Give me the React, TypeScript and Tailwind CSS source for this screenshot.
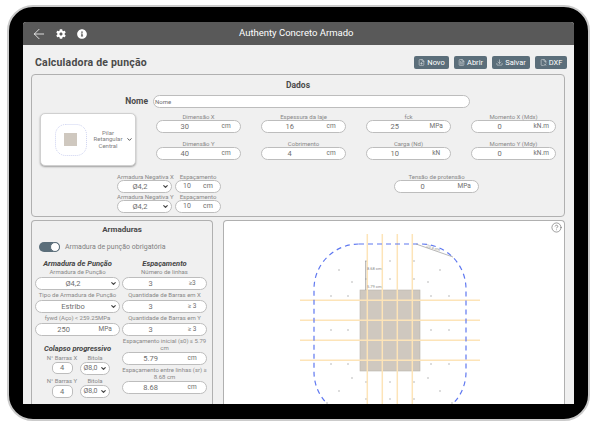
import { ArrowLeft, ChevronDown, CircleHelp, Download, FilePlus, FileText, FileX2 } from "lucide-react";
import { FaCog, FaInfoCircle } from "react-icons/fa";

const BUTTONS = [
  { label: "Novo", icon: FilePlus, w: "w-[35px]" },
  { label: "Abrir", icon: FileText, w: "w-[33px]" },
  { label: "Salvar", icon: Download, w: "w-[38px]" },
  { label: "DXF", icon: FileX2, w: "w-[32px]" },
];

const DADOS = [
  { label: "Dimensão X", value: "30", unit: "cm" },
  { label: "Espessura da laje", value: "16", unit: "cm" },
  { label: "fck", value: "25", unit: "MPa" },
  { label: "Momento X (Mdx)", value: "0", unit: "kN.m" },
  { label: "Dimensão Y", value: "40", unit: "cm" },
  { label: "Cobrimento", value: "4", unit: "cm" },
  { label: "Carga (Nd)", value: "10", unit: "kN" },
  { label: "Momento Y (Mdy)", value: "0", unit: "kN.m" },
];

// dots of the punching perimeter, in screen pixels
const DOTS = [
  [338, 270], [351, 282], [330, 296], [347, 296], [330, 330], [347, 330], [330, 364], [347, 364],
  [351, 378], [338, 391], [326, 403], [365, 261], [389, 261], [413, 261], [365, 279], [389, 279],
  [413, 279], [439, 270], [427, 282], [430, 296], [448, 296], [430, 330], [448, 330], [430, 364],
  [448, 364], [427, 378], [439, 391], [451, 403], [365, 382], [389, 382], [413, 382], [365, 399],
  [389, 399], [413, 399],
];

function Box({ value, unit }: { value: string; unit?: string }) {
  return (
    <div className="flex h-[13px] w-full items-center rounded-[7px] border border-[#bdbdbd] bg-white text-[7.5px] leading-[11px] text-[#6e6e6e]">
      <span className="w-[56px] text-center">{value}</span>
      <span className="w-[28px] text-center text-[6.5px]">{unit}</span>
    </div>
  );
}

function Field({ label, value, unit }: { label: string; value: string; unit?: string }) {
  return (
    <div className="w-[85px]">
      <div className="h-[7px] text-center text-[6px] leading-[7px] whitespace-nowrap text-[#888]">{label}</div>
      <Box value={value} unit={unit} />
    </div>
  );
}

function Drop({ value, className = "" }: { value: string; className?: string }) {
  return (
    <div className={`flex h-[13px] items-center rounded-[7px] border border-[#bdbdbd] bg-white pr-[2px] text-[7.5px] text-[#6e6e6e] ${className}`}>
      <span className="flex-1 text-center">{value}</span>
      <ChevronDown size={7} strokeWidth={4} className="text-[#444]" />
    </div>
  );
}

function Labelled({ label, children, h = "h-[9px]" }: { label: string; children: React.ReactNode; h?: string }) {
  return (
    <div className="mb-[1px] w-[85px]">
      <div className={`${h} flex items-center justify-center text-center text-[6px] leading-[6.5px] text-[#888]`}>{label}</div>
      {children}
    </div>
  );
}

function Negative({ label }: { label: string }) {
  return (
    <div className="flex gap-[3px]">
      <div className="w-[55px]">
        <div className="h-[7px] text-center text-[6px] leading-[7px] whitespace-nowrap text-[#888]">{label}</div>
        <Drop value="Ø4,2" />
      </div>
      <div className="w-[46px]">
        <div className="h-[7px] text-center text-[6px] leading-[7px] text-[#888]">Espaçamento</div>
        <div className="flex h-[13px] items-center rounded-[7px] border border-[#bdbdbd] bg-white text-[7px] text-[#6e6e6e]">
          <span className="w-[22px] text-center">10</span>
          <span className="w-[20px] text-center">cm</span>
        </div>
      </div>
    </div>
  );
}

function Diagram() {
  return (
    <svg viewBox="223 221 341 183" className="block h-[183px] w-[341px]">
      <rect x="359" y="290" width="60" height="81" fill="#cfc8bf" stroke="#b9b4ac" strokeWidth="0.6" />
      {DOTS.map(([x, y]) => (
        <rect key={`${x}-${y}`} x={x - 0.5} y={y - 0.5} width="1" height="1" fill="#777" />
      ))}
      {[366.3, 381.3, 396.3, 411.3].map((x) => (
        <line key={x} x1={x} y1="234" x2={x} y2="404" stroke="#fde4b8" strokeWidth="1.5" />
      ))}
      {[300.3, 320.3, 340.3, 360.3].map((y) => (
        <line key={y} x1="299" y1={y} x2="479" y2={y} stroke="#fde4b8" strokeWidth="1.5" />
      ))}
      <rect x="313" y="244" width="152" height="173" rx="45" fill="none" stroke="#5f78f0" strokeWidth="1.2" strokeDasharray="5 4" />
      <line x1="364.7" y1="261" x2="364.7" y2="290" stroke="#888" strokeWidth="0.7" />
      <line x1="415" y1="244" x2="452" y2="257" stroke="#999" strokeWidth="0.7" />
      <g fontFamily="Roboto, sans-serif" fontSize="4" fill="#888">
        <text x="366" y="269.5">8.68 cm</text>
        <text x="366" y="287.5">5.79 cm</text>
        <text x="425" y="247" transform="rotate(18 425 247)">20.4 cm</text>
      </g>
    </svg>
  );
}

export default function App() {
  return (
    <div className="h-[429px] w-[597px] overflow-hidden bg-white pt-[5px] pl-[7px] font-['Roboto',sans-serif]">
      <div className="h-[416px] w-[583px] rounded-[26px] border-2 border-[#cbcbcb] bg-black px-[14px] py-[15px]">
        <div className="flex h-full flex-col overflow-hidden rounded-t-[3px] bg-[#f0f0f0]">
          <header className="relative flex h-[23px] shrink-0 items-center bg-[#595959] pl-[8px] text-white">
            <ArrowLeft size={16} strokeWidth={1.2} />
            <FaCog className="ml-[9px] h-[10px] w-[10px]" />
            <FaInfoCircle className="ml-[11px] h-[10px] w-[10px]" />
            <div className="absolute left-[216px] text-[9.5px] whitespace-nowrap">Authenty Concreto Armado</div>
          </header>

          <div className="flex min-h-0 flex-1 flex-col pr-[9px] pl-[8px]">
            <div className="flex h-[29px] shrink-0 items-start justify-between pt-[11px]">
              <h1 className="pl-[4px] text-[10.5px] leading-[13px] font-bold tracking-[0.2px] text-[#4a4a4a]">Calculadora de punção</h1>
              <div className="mr-[-2px] flex gap-[5px]">
                {BUTTONS.map((b) => (
                  <button key={b.label} className={`flex h-[13px] items-center justify-center gap-[2px] rounded-[2px] bg-[#5b6e7a] text-[7.5px] text-white ${b.w}`}>
                    <b.icon size={7} strokeWidth={1.5} />
                    {b.label}
                  </button>
                ))}
              </div>
            </div>

            {/* Dados */}
            <section className="h-[143px] shrink-0 rounded-[4px] border border-[#b0b0b0] bg-[#f0f0f0]">
              <h2 className="mt-[4px] h-[12px] text-center text-[8.5px] leading-[12px] font-bold text-[#4a4a4a]">Dados</h2>
              <div className="mt-[4px] flex h-[13px] items-center gap-[5px]">
                <span className="w-[116px] text-right text-[8.5px] font-bold text-[#4a4a4a]">Nome</span>
                <div className="flex h-[13px] w-[317px] items-center rounded-[7px] border border-[#bdbdbd] bg-white pl-[1px] text-[6px] text-[#6e6e6e]">Nome</div>
              </div>

              <div className="mt-[5px] flex pl-[8px]">
                <div className="flex h-[53px] w-[96px] items-center rounded-[5px] border border-[#d0d0d0] bg-white shadow-[0_1px_2px_rgba(0,0,0,0.35)]">
                  <svg viewBox="0 0 32 32" className="ml-[14px] h-[32px] w-[32px] shrink-0">
                    <rect x="0.5" y="0.5" width="31" height="31" rx="10" fill="none" stroke="#9aa4e0" strokeWidth="0.5" strokeDasharray="1 1" />
                    <rect x="9" y="9" width="13" height="13" fill="#cfc8bf" />
                  </svg>
                  <div className="ml-[6px] w-[30px] text-center text-[6px] leading-[6.6px] text-[#808080]">Pilar Retangular Central</div>
                  <ChevronDown size={7} strokeWidth={3} className="ml-[3px] shrink-0 text-[#444]" />
                </div>
                <div className="ml-[20px] grid grid-cols-[repeat(4,85px)] gap-x-[20px]">
                  {DADOS.map((f) => (
                    <Field key={f.label} {...f} />
                  ))}
                </div>
              </div>

              <div className="mt-[7px] flex pl-[85px]">
                <div className="w-[104px]">
                  <Negative label="Armadura Negativa X" />
                  <Negative label="Armadura Negativa Y" />
                </div>
                <div className="ml-[173px]">
                  <Field label="Tensão de protensão" value="0" unit="MPa" />
                </div>
              </div>
            </section>

            <div className="mt-[3px] flex min-h-0 flex-1 gap-[10px]">
              {/* Armaduras */}
              <section className="w-[182px] shrink-0 rounded-t-[4px] border-x border-t border-[#b0b0b0] bg-[#f0f0f0]">
                <h2 className="mt-[3px] h-[12px] text-center text-[8px] leading-[12px] font-bold text-[#4a4a4a]">Armaduras</h2>
                <div className="mt-[6px] flex h-[10px] items-center pl-[7px]">
                  <div className="flex h-[10px] w-[21px] justify-end rounded-full bg-[#5b6e7a]">
                    <div className="h-[10px] w-[10px] rounded-full border border-[#5b6e7a] bg-white" />
                  </div>
                  <span className="ml-[5px] text-[7px] text-[#808080]">Armadura de punção obrigatória</span>
                </div>

                <div className="mt-[7px] flex gap-[2px] pl-[3px]">
                  <div className="w-[85px]">
                    <h3 className="h-[9px] text-center text-[7.5px] leading-[9px] font-bold text-[#444] italic">Armadura de Punção</h3>
                    <Labelled label="Armadura de Punção"><Drop value="Ø4,2" /></Labelled>
                    <Labelled label="Tipo de Armadura de Punção"><Drop value="Estribo" /></Labelled>
                    <Labelled label="fywd (Aço) < 259.25MPa"><Box value="250" unit="MPa" /></Labelled>
                    <h3 className="mt-[8px] h-[9px] text-center text-[7.5px] leading-[9px] font-bold whitespace-nowrap text-[#444] italic">Colapso progressivo</h3>
                    <div className="grid grid-cols-[34px_30px] gap-x-[1px] pl-[10px] text-center text-[6px] text-[#888]">
                      <div className="h-[9px] leading-[9px] whitespace-nowrap">N° Barras X</div>
                      <div className="h-[9px] leading-[9px]">Bitola</div>
                      <div className="mx-auto flex h-[12px] w-[21px] items-center justify-center rounded-[5px] border border-[#bdbdbd] bg-white text-[7.5px] text-[#6e6e6e]">4</div>
                      <Drop value="Ø8,0" className="w-[30px] text-[7px]" />
                      <div className="mt-[1px] h-[9px] leading-[9px] whitespace-nowrap">N° Barras Y</div>
                      <div className="mt-[1px] h-[9px] leading-[9px]">Bitola</div>
                      <div className="mx-auto flex h-[13px] w-[21px] items-center justify-center rounded-[5px] border border-[#bdbdbd] bg-white text-[7.5px] text-[#6e6e6e]">4</div>
                      <Drop value="Ø8,0" className="w-[30px] text-[7px]" />
                    </div>
                  </div>

                  <div className="w-[85px]">
                    <h3 className="h-[9px] text-center text-[7.5px] leading-[9px] font-bold text-[#444] italic">Espaçamento</h3>
                    <Labelled label="Número de linhas"><Box value="3" unit="≥3" /></Labelled>
                    <Labelled label="Quantidade de Barras em X"><Box value="3" unit="≥ 3" /></Labelled>
                    <Labelled label="Quantidade de Barras em Y"><Box value="3" unit="≥ 3" /></Labelled>
                    <Labelled label="Espaçamento inicial (s0) ≤ 5.79 cm" h="h-[15px]"><Box value="5.79" unit="cm" /></Labelled>
                    <Labelled label="Espaçamento entre linhas (sr) ≥ 8.68 cm" h="h-[15px]"><Box value="8.68" unit="cm" /></Labelled>
                  </div>
                </div>
              </section>

              {/* Diagram */}
              <section className="relative min-w-0 flex-1 overflow-hidden rounded-t-[4px] border-x border-t border-[#b0b0b0] bg-white">
                <Diagram />
                <CircleHelp size={11} strokeWidth={1.2} className="absolute top-[1px] right-[2px] text-[#555]" />
              </section>
            </div>
          </div>
        </div>
      </div>
    </div>
  );
}
